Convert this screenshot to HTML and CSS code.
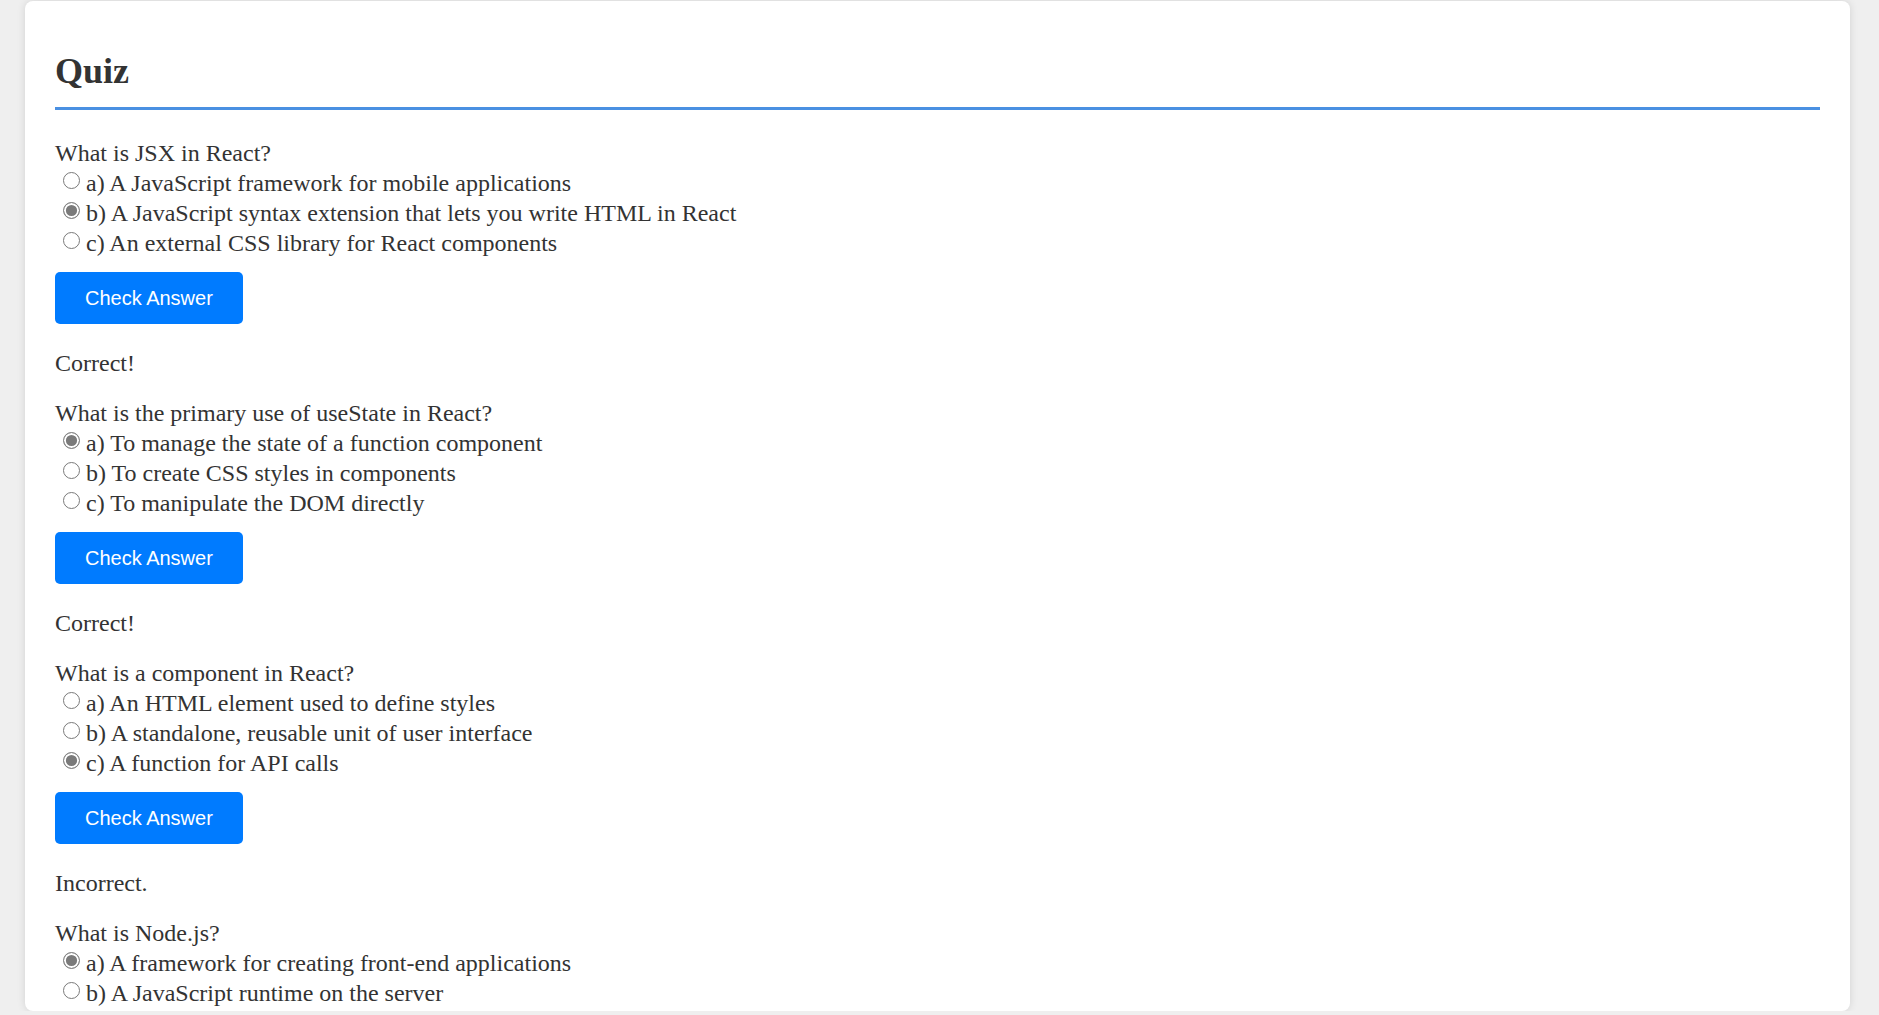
FILE: index.html
```html
<!DOCTYPE html>
<html lang="en">
<head>
<meta charset="utf-8">
<title>Quiz</title>
<link rel="stylesheet" href="styles.css">
</head>
<body>
<div class="card">
  <h1 class="title">Quiz</h1>

  <div class="question">
    <div class="q-text">What is JSX in React?</div>
    <div class="opt"><span class="radio"></span>a) A JavaScript framework for mobile applications</div>
    <div class="opt"><span class="radio checked"></span>b) A JavaScript syntax extension that lets you write HTML in React</div>
    <div class="opt"><span class="radio"></span>c) An external CSS library for React components</div>
    <button class="check-btn">Check Answer</button>
    <div class="result">Correct!</div>
  </div>

  <div class="question">
    <div class="q-text">What is the primary use of useState in React?</div>
    <div class="opt"><span class="radio checked"></span>a) To manage the state of a function component</div>
    <div class="opt"><span class="radio"></span>b) To create CSS styles in components</div>
    <div class="opt"><span class="radio"></span>c) To manipulate the DOM directly</div>
    <button class="check-btn">Check Answer</button>
    <div class="result">Correct!</div>
  </div>

  <div class="question">
    <div class="q-text">What is a component in React?</div>
    <div class="opt"><span class="radio"></span>a) An HTML element used to define styles</div>
    <div class="opt"><span class="radio"></span>b) A standalone, reusable unit of user interface</div>
    <div class="opt"><span class="radio checked"></span>c) A function for API calls</div>
    <button class="check-btn">Check Answer</button>
    <div class="result">Incorrect.</div>
  </div>

  <div class="question">
    <div class="q-text">What is Node.js?</div>
    <div class="opt"><span class="radio checked"></span>a) A framework for creating front-end applications</div>
    <div class="opt"><span class="radio"></span>b) A JavaScript runtime on the server</div>
  </div>
</div>
</body>
</html>
```

FILE: styles.css
```css
html, body {
  margin: 0;
  padding: 0;
}

body {
  background: #efefef;
  font-family: "Liberation Serif", "Times New Roman", serif;
  color: #333;
  overflow: hidden;
}

.card {
  margin: 1px 0 0 25px;
  width: 1825px;
  height: 1010px;
  box-sizing: border-box;
  padding: 46.85px 30px 0 30px;
  background: #fff;
  border-radius: 8px;
  box-shadow: 0 0 8px rgba(0, 0, 0, 0.12);
  overflow: hidden;
}

.title {
  margin: 0 0 26.9px 0;
  font-size: 36px;
  line-height: 46px;
  font-weight: bold;
  color: #333;
  padding-bottom: 13.15px;
  border-bottom: 3px solid #4a90e2;
}

.question {
  display: flex;
  flex-direction: column;
  align-items: flex-start;
  font-size: 24px;
  line-height: 30px;
  margin-bottom: 20px;
}

.q-text,
.opt,
.result {
  box-sizing: border-box;
  height: 30px;
  padding-top: 1px;
  white-space: nowrap;
}

.opt {
  display: flex;
  align-items: flex-start;
}

.radio {
  flex: none;
  width: 17px;
  height: 17px;
  box-sizing: border-box;
  margin: 4.1px 6.5px 0 7.5px;
  border: 1.3px solid #7a7a7a;
  border-radius: 50%;
  background: #fff;
}

.radio.checked {
  border: 1.7px solid #858585;
  background: #7a7a7a;
  box-shadow: inset 0 0 0 1.9px #fff;
}

.check-btn {
  margin-top: 15.1px;
  height: 52px;
  padding: 0 30px;
  border: none;
  border-radius: 5px;
  background: #007bff;
  color: #fff;
  font-family: "Liberation Sans", Arial, sans-serif;
  font-size: 20px;
  line-height: 52px;
  cursor: pointer;
}

.result {
  margin-top: 22.9px;
}
```
